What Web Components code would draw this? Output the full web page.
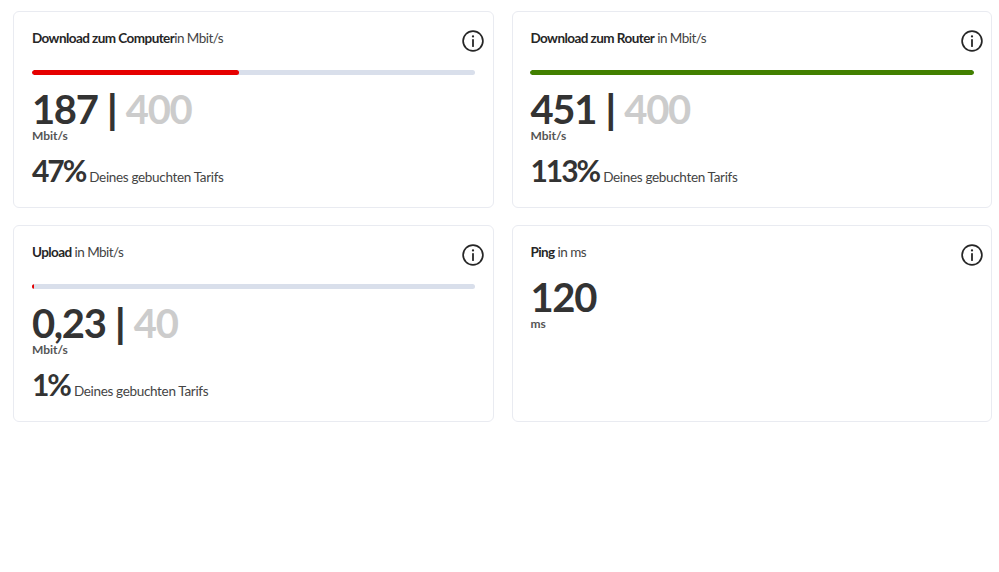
<!DOCTYPE html>
<html lang="de">
<head>
<meta charset="utf-8">
<title>Speedtest</title>
<style>
  html, body { margin: 0; background: #fff; }
  body { font-family: Lato, "Noto Sans", sans-serif; color: #333; }
</style>
</head>
<body>
<speed-grid>
  <speed-card title-bold="Download zum Computer" title-rest="in Mbit/s" value="187" max="400" percent="47" fill="46.7" color="#e60000"></speed-card>
  <speed-card title-bold="Download zum Router" title-rest=" in Mbit/s" value="451" max="400" percent="113" fill="100" color="#428000"></speed-card>
  <speed-card title-bold="Upload" title-rest=" in Mbit/s" value="0,23" max="40" percent="1" fill="0.5" color="#e60000"></speed-card>
  <speed-card title-bold="Ping" title-rest=" in ms" value="120" unit="ms"></speed-card>
</speed-grid>
<script>
  class SpeedGrid extends HTMLElement {
    constructor() {
      super();
      this.attachShadow({ mode: 'open' });
      this.shadowRoot.innerHTML = `
        <style>
          :host {
            display: grid;
            grid-template-columns: 480.5px 480.5px;
            grid-auto-rows: 196.5px;
            column-gap: 18px;
            row-gap: 17.5px;
            padding: 11px 0 0 13.4px;
          }
        </style>
        <slot></slot>
      `;
    }
  }

  class InfoIcon extends HTMLElement {
    constructor() {
      super();
      this.attachShadow({ mode: 'open' });
      this.shadowRoot.innerHTML = `
        <style>
          :host { display: block; width: 22px; height: 22px; }
          svg { display: block; }
        </style>
        <svg width="22" height="22" viewBox="0 0 22 22" fill="none" stroke="#262626">
          <circle cx="11" cy="11" r="9.9" stroke-width="1.7"/>
          <path d="M11 9.8v6.4" stroke-width="1.8" stroke-linecap="round"/>
          <circle cx="11" cy="6.4" r="1.15" fill="#262626" stroke="none"/>
        </svg>
      `;
    }
  }

  class SpeedCard extends HTMLElement {
    constructor() {
      super();
      this.attachShadow({ mode: 'open' });
      this.shadowRoot.innerHTML = `
        <style>
          :host {
            display: block;
            position: relative;
            box-sizing: border-box;
            border: 1px solid #e9ebf1;
            border-radius: 6px;
            padding: 18px 17.5px 0;
            font-family: Lato, "Noto Sans", sans-serif;
            color: #333;
          }
          .title { font-size: 13.5px; line-height: 16px; height: 16px; white-space: pre; color: #444; letter-spacing: -0.55px; }
          .title b { font-weight: 700; color: #262626; }
          info-icon { position: absolute; top: 17.5px; right: 8.5px; }
          .track { height: 5px; margin-top: 24px; border-radius: 3px; background: #d9dfeb; overflow: hidden; }
          .track i { display: block; height: 100%; border-radius: 3px; }
          .nums { font-size: 40px; font-weight: 700; line-height: 36px; margin-top: 16px; white-space: pre; color: #333; letter-spacing: -1.3px; word-spacing: 1px; }
          .nums.solo { margin-top: 19px; }
          .nums u { text-decoration: none; font-weight: 900; }
          .nums span { color: #ccc; }
          .unit { font-size: 12px; font-weight: 700; line-height: 12px; margin-top: 3px; color: #555; }
          .share { display: flex; align-items: baseline; gap: 4px; margin-top: 13px; }
          .share b { font-size: 30px; line-height: 30px; font-weight: 700; color: #333; letter-spacing: -2px; }
          .share span { font-size: 13.5px; color: #444; letter-spacing: -0.33px; }
          [hidden] { display: none; }
        </style>
        <div class="title"><b></b><span class="rest"></span></div>
        <info-icon></info-icon>
        <div class="track"><i></i></div>
        <div class="nums"></div>
        <div class="unit"></div>
        <div class="share"><b></b><span>Deines gebuchten Tarifs</span></div>
      `;
    }
    connectedCallback() {
      const root = this.shadowRoot;
      root.querySelector('.title b').textContent = this.getAttribute('title-bold');
      root.querySelector('.rest').textContent = this.getAttribute('title-rest');
      const nums = root.querySelector('.nums');
      nums.textContent = this.getAttribute('value');
      root.querySelector('.unit').textContent = this.getAttribute('unit') || 'Mbit/s';
      if (this.hasAttribute('max')) {
        nums.append(' ');
        const bar = document.createElement('u');
        bar.textContent = '|';
        nums.appendChild(bar);
        nums.append(' ');
        const max = document.createElement('span');
        max.textContent = this.getAttribute('max');
        nums.appendChild(max);
        const fill = root.querySelector('.track i');
        fill.style.width = this.getAttribute('fill') + '%';
        fill.style.background = this.getAttribute('color');
        root.querySelector('.share b').textContent = this.getAttribute('percent') + '%';
      } else {
        root.querySelector('.track').hidden = true;
        root.querySelector('.share').hidden = true;
        nums.classList.add('solo');
      }
    }
  }

  customElements.define('info-icon', InfoIcon);
  customElements.define('speed-card', SpeedCard);
  customElements.define('speed-grid', SpeedGrid);
</script>
</body>
</html>
